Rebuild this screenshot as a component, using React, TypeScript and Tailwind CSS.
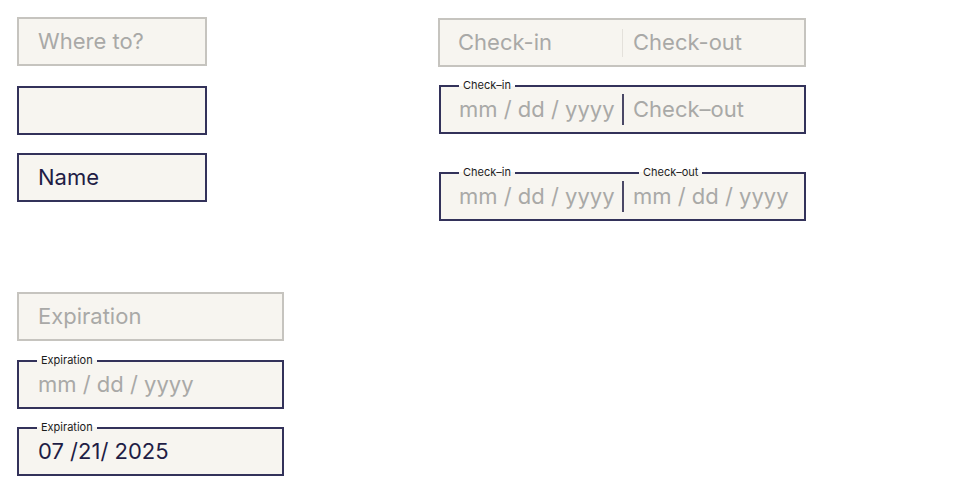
import React from "react";

const font = { fontFamily: "Inter, 'Liberation Sans', sans-serif" };

// small floating label that sits on the top border
const Label: React.FC<{ text: string; className?: string }> = ({ text, className }) => (
  <span
    className={
      "absolute top-[-8px] px-[4px] text-[11px] leading-[13px] text-[#1c1c1c] bg-gradient-to-b from-white from-50% to-[#f7f5f0] to-50% " +
      (className ?? "")
    }
  >
    {text}
  </span>
);

const App: React.FC = () => {
  return (
    <div className="w-[956px] h-[500px] bg-white flex" style={font}>
      {/* Left column */}
      <div className="flex flex-col pl-[17px] w-[438px]">
        <div className="mt-[17px] w-[190px] h-[49px] border-2 border-[#c6c4bf] bg-[#f7f5f0] flex items-center pl-[19px]">
          <span className="text-[22px] text-[#a9a9a7]">Where to?</span>
        </div>

        <div className="mt-[20px] w-[190px] h-[49px] border-2 border-[#33325a] bg-[#f7f5f0]" />

        <div className="mt-[18px] w-[190px] h-[49px] border-2 border-[#33325a] bg-[#f7f5f0] flex items-center pl-[19px]">
          <span className="text-[22px] text-[#1f1d45]">Name</span>
        </div>

        <div className="mt-[90px] w-[267px] h-[49px] border-2 border-[#c6c4bf] bg-[#f7f5f0] flex items-center pl-[19px]">
          <span className="text-[22px] text-[#a9a9a7]">Expiration</span>
        </div>

        <div className="relative mt-[19px] w-[267px] h-[49px] border-2 border-[#33325a] bg-[#f7f5f0] flex items-center pl-[19px]">
          <Label text="Expiration" className="left-[18px]" />
          <span className="text-[22px] text-[#a9a9a7]">mm / dd / yyyy</span>
        </div>

        <div className="relative mt-[18px] w-[267px] h-[49px] border-2 border-[#33325a] bg-[#f7f5f0] flex items-center pl-[19px]">
          <Label text="Expiration" className="left-[18px]" />
          <span className="text-[22px] text-[#1f1d45]">07 /21/ 2025</span>
        </div>
      </div>

      {/* Right column */}
      <div className="flex flex-col">
        <div className="mt-[18px] w-[368px] h-[49px] border-2 border-[#c6c4bf] bg-[#f7f5f0] flex items-center">
          <div className="w-[182px] pl-[18px]">
            <span className="text-[22px] text-[#a9a9a7]">Check-in</span>
          </div>
          <div className="w-[1px] h-[28px] bg-[#e4e1db]" />
          <div className="pl-[10px]">
            <span className="text-[22px] text-[#a9a9a7]">Check-out</span>
          </div>
        </div>

        <div className="relative mt-[18px] ml-[1px] w-[367px] h-[49px] border-2 border-[#33325a] bg-[#f7f5f0] flex items-center">
          <Label text="Check–in" className="left-[18px]" />
          <div className="w-[181px] pl-[18px]">
            <span className="text-[22px] text-[#a9a9a7]">mm / dd / yyyy</span>
          </div>
          <div className="w-[2px] h-[31px] bg-[#4a4866]" />
          <div className="pl-[9px]">
            <span className="text-[22px] text-[#a9a9a7]">Check–out</span>
          </div>
        </div>

        <div className="relative mt-[38px] ml-[1px] w-[367px] h-[49px] border-2 border-[#33325a] bg-[#f7f5f0] flex items-center">
          <Label text="Check–in" className="left-[18px]" />
          <Label text="Check–out" className="left-[198px]" />
          <div className="w-[181px] pl-[18px]">
            <span className="text-[22px] text-[#a9a9a7]">mm / dd / yyyy</span>
          </div>
          <div className="w-[2px] h-[31px] bg-[#4a4866]" />
          <div className="pl-[9px]">
            <span className="text-[22px] text-[#a9a9a7]">mm / dd / yyyy</span>
          </div>
        </div>
      </div>
    </div>
  );
};

export default App;
